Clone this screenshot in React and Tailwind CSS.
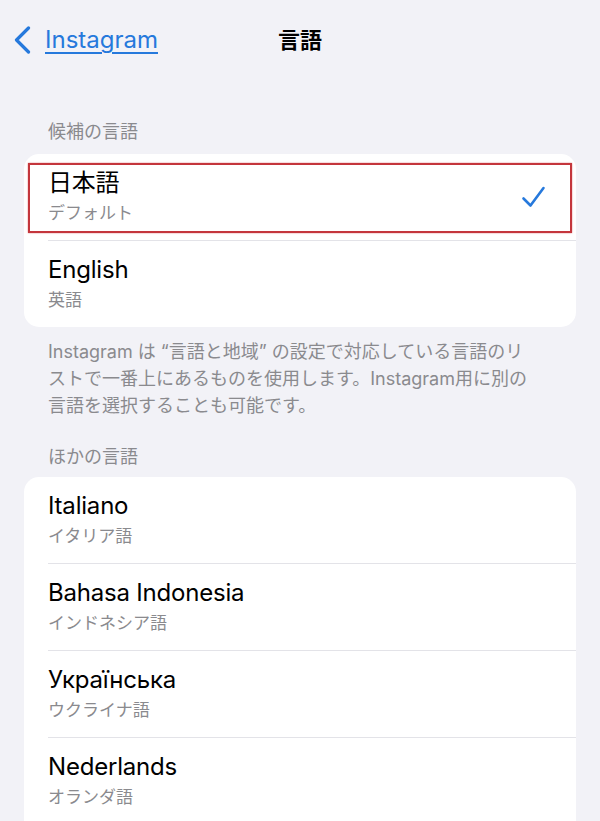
import React from 'react';

const fontStack = "font-['Inter','Noto_Sans_CJK_JP',sans-serif]";

const preferred = [
    { name: '日本語', sub: 'デフォルト', selected: true },
    { name: 'English', sub: '英語' },
];

const others = [
    { name: 'Italiano', sub: 'イタリア語' },
    { name: 'Bahasa Indonesia', sub: 'インドネシア語' },
    { name: 'Українська', sub: 'ウクライナ語' },
    { name: 'Nederlands', sub: 'オランダ語' },
];

const Check = () => (
    <svg width="26" height="26" viewBox="0 0 26 26" fill="none" className="shrink-0">
        <path d="M3.5 14.5 L10.5 21.5 L23.5 4" stroke="#2679dc" strokeWidth="2.6" strokeLinecap="round" strokeLinejoin="round" />
    </svg>
);

const LanguageRow = ({ lang, last }) => (
    <div className="pl-[24px]">
        <div className={`flex items-start justify-between pr-[30px] ${last ? 'h-[86px]' : 'h-[87px] border-b border-[#e3e3e8]'}`}>
            <div className="pt-[15px]">
                <div className="text-[24px] leading-[28px] text-black tracking-[-0.2px]">{lang.name}</div>
                <div className="text-[17px] leading-[22px] text-[#8a8a8e] mt-[5px]">{lang.sub}</div>
            </div>
            {lang.selected && (
                <div className="self-center -mt-[1px]">
                    <Check />
                </div>
            )}
        </div>
    </div>
);

const SectionHeader = ({ children, className = '' }) => (
    <div className={`pl-[48px] text-[18px] leading-[24px] text-[#8a8a8e] ${className}`}>{children}</div>
);

export default function App() {
    return (
        <div className={`min-h-screen bg-[#f2f2f7] ${fontStack} overflow-hidden`}>
            {/* Nav bar */}
            <div className="h-[80px] grid grid-cols-[1fr_auto_1fr] items-center">
                <div className="flex items-center pl-[14px]">
                    <svg width="17" height="28" viewBox="0 0 17 28" fill="none">
                        <path d="M14.5 2 L2.5 14 L14.5 26" stroke="#2679dc" strokeWidth="3.2" strokeLinecap="round" strokeLinejoin="round" />
                    </svg>
                    <span className="ml-[14px] text-[24px] leading-[28px] text-[#2679dc] underline underline-offset-[4px] decoration-[1.5px]">
                        Instagram
                    </span>
                </div>
                <div className="text-[22px] font-bold text-black leading-[28px]">言語</div>
                <div />
            </div>

            {/* Preferred languages */}
            <SectionHeader className="pt-[40px]">候補の言語</SectionHeader>
            <div className="relative mx-[24px] mt-[10px] bg-white rounded-[15px] overflow-hidden">
                {preferred.map((lang, i) => (
                    <LanguageRow key={lang.name} lang={lang} last={i === preferred.length - 1} />
                ))}
                {/* highlight box */}
                <div className="absolute left-[4px] right-[4px] top-[9px] h-[70px] border-2 border-[#c4363c] shadow-[0_0_1.5px_#e07c80]" />
            </div>

            <div className="pl-[48px] pr-[20px] mt-[11px] text-[18px] leading-[27px] text-[#8a8a8e]">
                Instagram は “言語と地域” の設定で対応している言語のリ<br />
                ストで一番上にあるものを使用します。Instagram用に別の<br />
                言語を選択することも可能です。
            </div>

            {/* Other languages */}
            <SectionHeader className="mt-[26px]">ほかの言語</SectionHeader>
            <div className="mx-[24px] mt-[8px] bg-white rounded-t-[15px]">
                {others.map((lang) => (
                    <LanguageRow key={lang.name} lang={lang} last={false} />
                ))}
            </div>
        </div>
    );
}
